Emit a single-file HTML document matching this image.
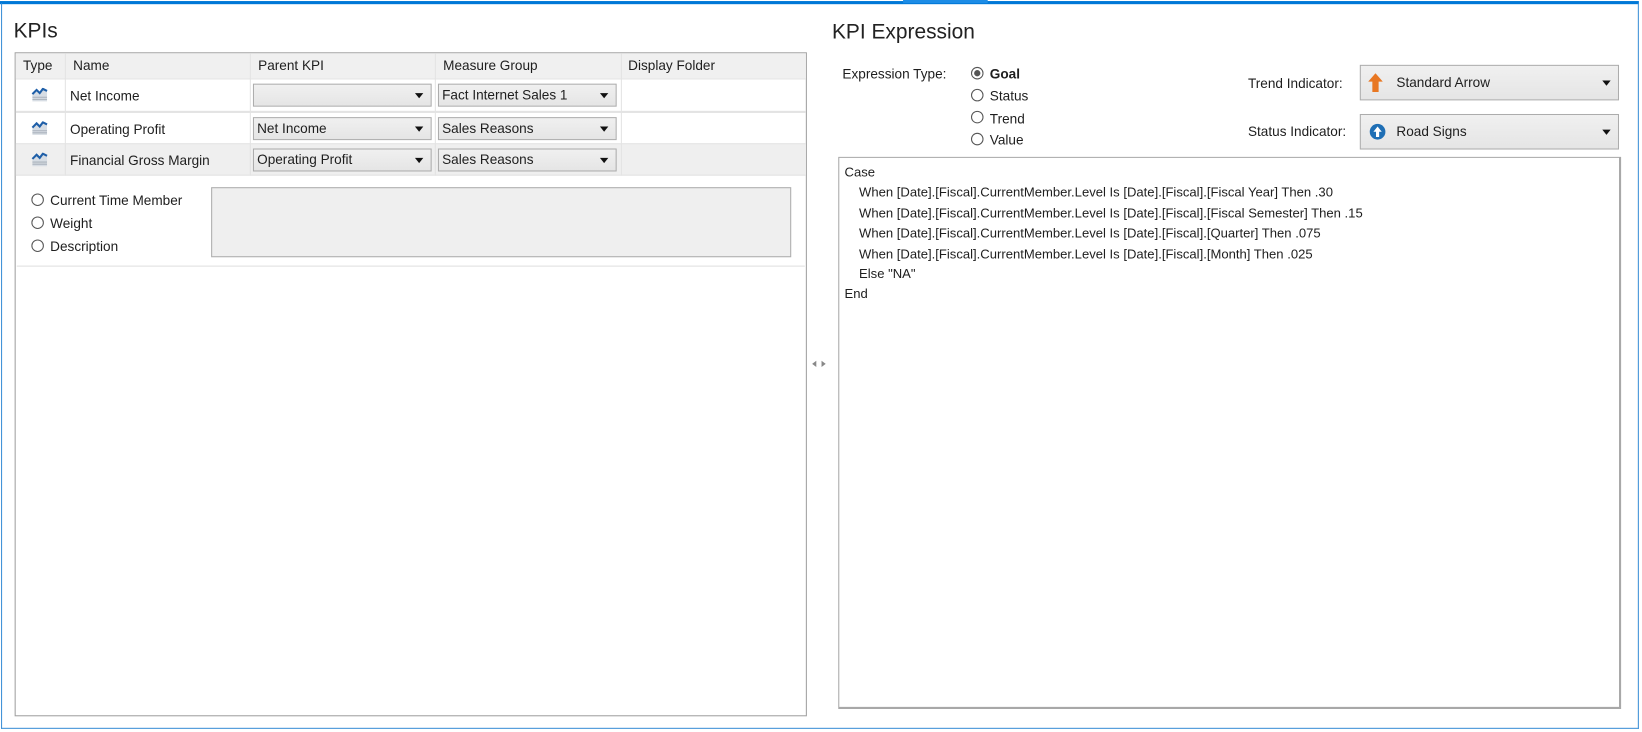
<!DOCTYPE html>
<html><head><meta charset="utf-8"><style>
*{box-sizing:border-box;margin:0;padding:0}
html,body{width:1642px;height:732px;overflow:hidden;background:#fff}
#w{position:absolute;left:0;top:0;width:1571px;height:700px;transform:scale(1.0452,1.0457);transform-origin:0 0;font-family:"Liberation Sans",sans-serif;font-size:13px;color:#1e1e1e}
.a{position:absolute}
.t{white-space:nowrap}
.dd{position:absolute;border:1px solid #acacac;background:linear-gradient(#f0f0f0,#e5e5e5);height:22px;padding-left:3px;line-height:20px;white-space:nowrap}
.dd:after{content:"";position:absolute;right:7px;top:50%;margin-top:-2px;border-left:4px solid transparent;border-right:4px solid transparent;border-top:5px solid #111}
.rad{position:absolute;width:12px;height:12px;border:1px solid #555;border-radius:50%;background:#fff}
.ic{position:absolute;width:16px;height:14px}
</style></head><body><div id="w">
<div class="a" style="left:0;top:1px;width:1568px;height:3px;background:#0078d7"></div>
<div class="a" style="left:864px;top:0;width:81px;height:3px;background:#1c8ce6"></div>
<div class="a" style="left:1px;top:3px;width:1px;height:694px;background:#3c8fd6"></div>
<div class="a" style="left:1567px;top:3px;width:1px;height:694px;background:#3c8fd6"></div>
<div class="a" style="left:1px;top:696px;width:1567px;height:1px;background:#3c8fd6"></div>

<div class="a t" style="left:13px;top:19px;font-size:20px;color:#222">KPIs</div>
<div class="a" style="left:14px;top:50px;width:758px;height:635px;border:1px solid #a0a0a0"></div>
<div class="a" style="left:15px;top:51px;width:756px;height:24px;background:#f0f0f0"></div>
<div class="a" style="left:15px;top:137px;width:756px;height:31px;background:#efefef"></div>
<div class="a" style="left:15px;top:75px;width:756px;height:1px;background:#e3e3e3"></div>
<div class="a" style="left:15px;top:106px;width:756px;height:2px;background:#e3e3e3"></div>
<div class="a" style="left:15px;top:137px;width:756px;height:1px;background:#e3e3e3"></div>
<div class="a" style="left:15px;top:167px;width:756px;height:1px;background:#e3e3e3"></div>
<div class="a" style="left:62px;top:51px;width:1px;height:117px;background:#e3e3e3"></div>
<div class="a" style="left:239px;top:51px;width:1px;height:117px;background:#e3e3e3"></div>
<div class="a" style="left:416px;top:51px;width:1px;height:117px;background:#e3e3e3"></div>
<div class="a" style="left:594px;top:51px;width:1px;height:117px;background:#e3e3e3"></div>
<div class="a t" style="left:22px;top:55px">Type</div>
<div class="a t" style="left:70px;top:55px">Name</div>
<div class="a t" style="left:247px;top:55px">Parent KPI</div>
<div class="a t" style="left:424px;top:55px">Measure Group</div>
<div class="a t" style="left:601px;top:55px">Display Folder</div>

<svg class="ic" style="left:30px;top:84px" viewBox="0 0 16 14"><path d="M1 6L5 2L8 5L11 1L15 3V13H1Z" fill="#d7dde4"/><path d="M1 6L5 2L8 5L11 1L15 3" fill="none" stroke="#1f5fa8" stroke-width="2"/><path d="M1 9H15M1 11H15" stroke="#aab2bb"/></svg>
<svg class="ic" style="left:30px;top:116px" viewBox="0 0 16 14"><path d="M1 6L5 2L8 5L11 1L15 3V13H1Z" fill="#d7dde4"/><path d="M1 6L5 2L8 5L11 1L15 3" fill="none" stroke="#1f5fa8" stroke-width="2"/><path d="M1 9H15M1 11H15" stroke="#aab2bb"/></svg>
<svg class="ic" style="left:30px;top:146px" viewBox="0 0 16 14"><path d="M1 6L5 2L8 5L11 1L15 3V13H1Z" fill="#d7dde4"/><path d="M1 6L5 2L8 5L11 1L15 3" fill="none" stroke="#1f5fa8" stroke-width="2"/><path d="M1 9H15M1 11H15" stroke="#aab2bb"/></svg>
<div class="a t" style="left:67px;top:84px">Net Income</div>
<div class="a t" style="left:67px;top:116px">Operating Profit</div>
<div class="a t" style="left:67px;top:146px">Financial Gross Margin</div>
<div class="dd" style="left:242px;top:80px;width:171px"></div>
<div class="dd" style="left:242px;top:112px;width:171px">Net Income</div>
<div class="dd" style="left:242px;top:142px;width:171px">Operating Profit</div>
<div class="dd" style="left:419px;top:80px;width:171px">Fact Internet Sales 1</div>
<div class="dd" style="left:419px;top:112px;width:171px">Sales Reasons</div>
<div class="dd" style="left:419px;top:142px;width:171px">Sales Reasons</div>

<div class="rad" style="left:30px;top:185px"></div><div class="a t" style="left:48px;top:184px">Current Time Member</div>
<div class="rad" style="left:30px;top:207px"></div><div class="a t" style="left:48px;top:206px">Weight</div>
<div class="rad" style="left:30px;top:229px"></div><div class="a t" style="left:48px;top:228px">Description</div>
<div class="a" style="left:202px;top:179px;width:555px;height:67px;background:#efefef;border:1px solid #adadad"></div>
<div class="a" style="left:16px;top:254px;width:754px;height:1px;background:#e0e0e0"></div>

<div class="a" style="left:777px;top:345px;border-top:3px solid transparent;border-bottom:3px solid transparent;border-right:4px solid #888"></div>
<div class="a" style="left:786px;top:345px;border-top:3px solid transparent;border-bottom:3px solid transparent;border-left:4px solid #888"></div>

<div class="a t" style="left:796px;top:20px;font-size:20px;color:#222">KPI Expression</div>
<div class="a t" style="left:806px;top:63px">Expression Type:</div>
<div class="rad" style="left:929px;top:64px"></div><div class="a" style="left:932px;top:67px;width:6px;height:6px;border-radius:50%;background:#555"></div>
<div class="a t" style="left:947px;top:63px;font-weight:bold">Goal</div>
<div class="rad" style="left:929px;top:85px"></div><div class="a t" style="left:947px;top:84px">Status</div>
<div class="rad" style="left:929px;top:106px"></div><div class="a t" style="left:947px;top:106px">Trend</div>
<div class="rad" style="left:929px;top:127px"></div><div class="a t" style="left:947px;top:126px">Value</div>

<div class="a t" style="left:1194px;top:72px">Trend Indicator:</div>
<div class="dd" style="left:1301px;top:62px;width:248px;height:34px;line-height:32px;padding-left:34px">Standard Arrow</div>
<svg class="a" style="left:1309px;top:70px" width="14" height="18" viewBox="0 0 14 18"><path d="M7 0L14 8H10V18H4V8H0Z" fill="#e87722"/></svg>
<div class="a t" style="left:1194px;top:118px">Status Indicator:</div>
<div class="dd" style="left:1301px;top:109px;width:248px;height:34px;line-height:32px;padding-left:34px">Road Signs</div>
<svg class="a" style="left:1310px;top:118px" width="16" height="16" viewBox="0 0 16 16"><circle cx="8" cy="8" r="7.5" fill="#1f6fb5"/><path d="M8 3L12 8H9.5V13H6.5V8H4Z" fill="#fff"/></svg>

<div class="a" style="left:802px;top:150px;width:749px;height:528px;border:1px solid #a8a8a8;border-bottom-width:2px;border-right-width:2px"></div>
<div class="a t" style="left:808px;top:156px;line-height:19.4px;font-size:12.5px">Case<br>&nbsp;&nbsp;&nbsp;&nbsp;When [Date].[Fiscal].CurrentMember.Level Is [Date].[Fiscal].[Fiscal Year] Then .30<br>&nbsp;&nbsp;&nbsp;&nbsp;When [Date].[Fiscal].CurrentMember.Level Is [Date].[Fiscal].[Fiscal Semester] Then .15<br>&nbsp;&nbsp;&nbsp;&nbsp;When [Date].[Fiscal].CurrentMember.Level Is [Date].[Fiscal].[Quarter] Then .075<br>&nbsp;&nbsp;&nbsp;&nbsp;When [Date].[Fiscal].CurrentMember.Level Is [Date].[Fiscal].[Month] Then .025<br>&nbsp;&nbsp;&nbsp;&nbsp;Else "NA"<br>End</div>
</div></body></html>
